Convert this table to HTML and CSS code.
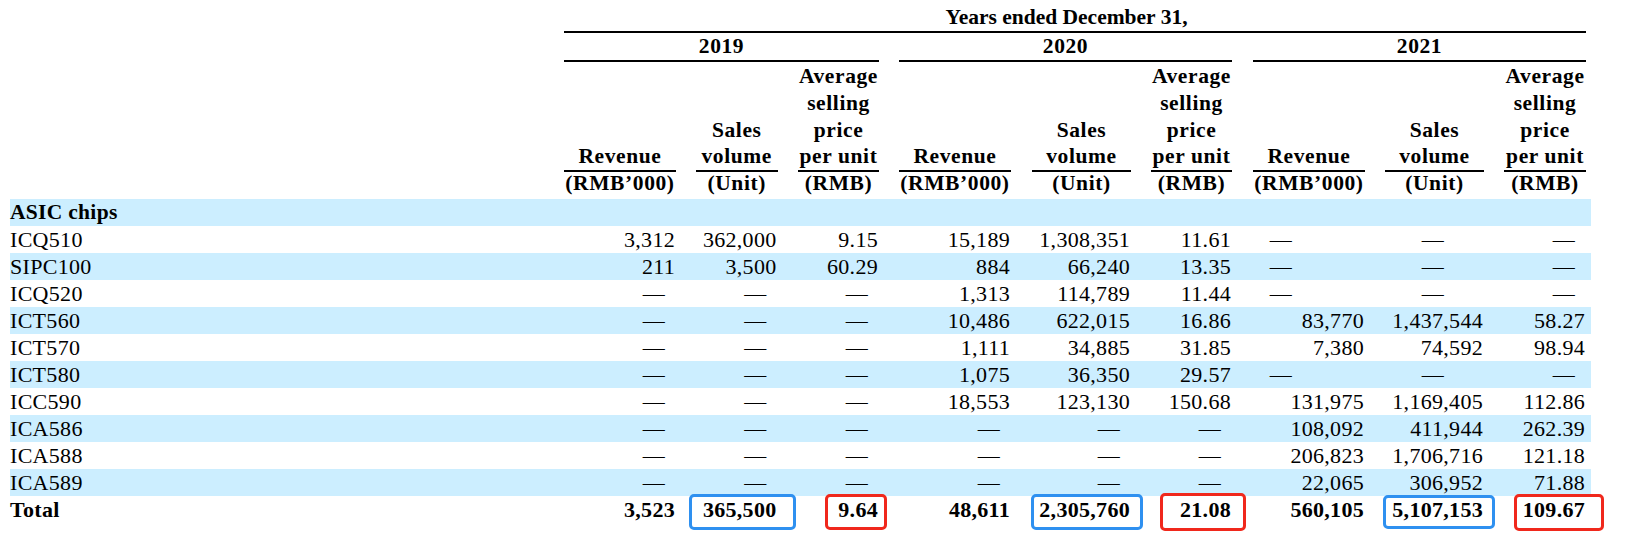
FILE: index.html
```html
<!DOCTYPE html>
<html lang="en">
<head>
<meta charset="utf-8">
<title>ASIC chips revenue</title>
<link rel="stylesheet" href="styles.css">
</head>
<body>
<div class="page">
<table class="fin">
  <colgroup>
    <col class="c-label">
    <col class="c-rev"><col class="c-gap"><col class="c-sv19"><col class="c-gap2"><col class="c-asp">
    <col class="c-gap">
    <col class="c-rev"><col class="c-gap3"><col class="c-sv"><col class="c-gap"><col class="c-asp">
    <col class="c-gap3">
    <col class="c-rev"><col class="c-gap"><col class="c-sv"><col class="c-gap"><col class="c-asp2">
    <col class="c-trail">
  </colgroup>
  <thead>
    <tr class="h-top">
      <td></td>
      <th colspan="17" class="rule title">Years ended December 31,</th>
      <td></td>
    </tr>
    <tr class="h-year">
      <td></td>
      <th colspan="5" class="rule">2019</th>
      <td></td>
      <th colspan="5" class="rule">2020</th>
      <td></td>
      <th colspan="5" class="rule">2021</th>
      <td></td>
    </tr>
    <tr class="h-col">
      <td></td>
      <th class="rule">Revenue</th><td></td>
      <th class="rule">Sales<br>volume</th><td></td>
      <th class="rule">Average<br>selling<br>price<br>per unit</th>
      <td></td>
      <th class="rule">Revenue</th><td></td>
      <th class="rule">Sales<br>volume</th><td></td>
      <th class="rule">Average<br>selling<br>price<br>per unit</th>
      <td></td>
      <th class="rule">Revenue</th><td></td>
      <th class="rule">Sales<br>volume</th><td></td>
      <th class="rule">Average<br>selling<br>price<br>per unit</th>
      <td></td>
    </tr>
    <tr class="h-unit">
      <td></td>
      <th>(RMB’000)</th><td></td>
      <th>(Unit)</th><td></td>
      <th>(RMB)</th>
      <td></td>
      <th>(RMB’000)</th><td></td>
      <th>(Unit)</th><td></td>
      <th>(RMB)</th>
      <td></td>
      <th>(RMB’000)</th><td></td>
      <th>(Unit)</th><td></td>
      <th>(RMB)</th>
      <td></td>
    </tr>
  </thead>
  <tbody>
    <tr class="shade section">
      <td class="label">ASIC chips</td>
      <td></td><td></td><td></td><td></td><td></td><td></td>
      <td></td><td></td><td></td><td></td><td></td><td></td>
      <td></td><td></td><td></td><td></td><td></td><td></td>
    </tr>
    <tr>
      <td class="label">ICQ510</td>
      <td class="num">3,312</td><td></td><td class="num">362,000</td><td></td><td class="num">9.15</td>
      <td></td>
      <td class="num">15,189</td><td></td><td class="num">1,308,351</td><td></td><td class="num">11.61</td>
      <td></td>
      <td class="dash d-rev21">—</td><td></td><td class="dash d-sv21">—</td><td></td><td class="dash">—</td>
      <td></td>
    </tr>
    <tr class="shade">
      <td class="label">SIPC100</td>
      <td class="num">211</td><td></td><td class="num">3,500</td><td></td><td class="num">60.29</td>
      <td></td>
      <td class="num">884</td><td></td><td class="num">66,240</td><td></td><td class="num">13.35</td>
      <td></td>
      <td class="dash d-rev21">—</td><td></td><td class="dash d-sv21">—</td><td></td><td class="dash">—</td>
      <td></td>
    </tr>
    <tr>
      <td class="label">ICQ520</td>
      <td class="dash">—</td><td></td><td class="dash">—</td><td></td><td class="dash">—</td>
      <td></td>
      <td class="num">1,313</td><td></td><td class="num">114,789</td><td></td><td class="num">11.44</td>
      <td></td>
      <td class="dash d-rev21">—</td><td></td><td class="dash d-sv21">—</td><td></td><td class="dash">—</td>
      <td></td>
    </tr>
    <tr class="shade">
      <td class="label">ICT560</td>
      <td class="dash">—</td><td></td><td class="dash">—</td><td></td><td class="dash">—</td>
      <td></td>
      <td class="num">10,486</td><td></td><td class="num">622,015</td><td></td><td class="num">16.86</td>
      <td></td>
      <td class="num">83,770</td><td></td><td class="num">1,437,544</td><td></td><td class="num">58.27</td>
      <td></td>
    </tr>
    <tr>
      <td class="label">ICT570</td>
      <td class="dash">—</td><td></td><td class="dash">—</td><td></td><td class="dash">—</td>
      <td></td>
      <td class="num">1,111</td><td></td><td class="num">34,885</td><td></td><td class="num">31.85</td>
      <td></td>
      <td class="num">7,380</td><td></td><td class="num">74,592</td><td></td><td class="num">98.94</td>
      <td></td>
    </tr>
    <tr class="shade">
      <td class="label">ICT580</td>
      <td class="dash">—</td><td></td><td class="dash">—</td><td></td><td class="dash">—</td>
      <td></td>
      <td class="num">1,075</td><td></td><td class="num">36,350</td><td></td><td class="num">29.57</td>
      <td></td>
      <td class="dash d-rev21">—</td><td></td><td class="dash d-sv21">—</td><td></td><td class="dash">—</td>
      <td></td>
    </tr>
    <tr>
      <td class="label">ICC590</td>
      <td class="dash">—</td><td></td><td class="dash">—</td><td></td><td class="dash">—</td>
      <td></td>
      <td class="num">18,553</td><td></td><td class="num">123,130</td><td></td><td class="num">150.68</td>
      <td></td>
      <td class="num">131,975</td><td></td><td class="num">1,169,405</td><td></td><td class="num">112.86</td>
      <td></td>
    </tr>
    <tr class="shade">
      <td class="label">ICA586</td>
      <td class="dash">—</td><td></td><td class="dash">—</td><td></td><td class="dash">—</td>
      <td></td>
      <td class="dash">—</td><td></td><td class="dash">—</td><td></td><td class="dash">—</td>
      <td></td>
      <td class="num">108,092</td><td></td><td class="num">411,944</td><td></td><td class="num">262.39</td>
      <td></td>
    </tr>
    <tr>
      <td class="label">ICA588</td>
      <td class="dash">—</td><td></td><td class="dash">—</td><td></td><td class="dash">—</td>
      <td></td>
      <td class="dash">—</td><td></td><td class="dash">—</td><td></td><td class="dash">—</td>
      <td></td>
      <td class="num">206,823</td><td></td><td class="num">1,706,716</td><td></td><td class="num">121.18</td>
      <td></td>
    </tr>
    <tr class="shade">
      <td class="label">ICA589</td>
      <td class="dash">—</td><td></td><td class="dash">—</td><td></td><td class="dash">—</td>
      <td></td>
      <td class="dash">—</td><td></td><td class="dash">—</td><td></td><td class="dash">—</td>
      <td></td>
      <td class="num">22,065</td><td></td><td class="num">306,952</td><td></td><td class="num">71.88</td>
      <td></td>
    </tr>
    <tr class="total">
      <td class="label">Total</td>
      <td class="num">3,523</td><td></td>
      <td class="num"><span class="mark blue m1">365,500</span></td><td></td>
      <td class="num"><span class="mark red m2">9.64</span></td>
      <td></td>
      <td class="num">48,611</td><td></td>
      <td class="num"><span class="mark blue m3">2,305,760</span></td><td></td>
      <td class="num"><span class="mark red m4">21.08</span></td>
      <td></td>
      <td class="num">560,105</td><td></td>
      <td class="num"><span class="mark blue m5">5,107,153</span></td><td></td>
      <td class="num"><span class="mark red m6">109.67</span></td>
      <td></td>
    </tr>
  </tbody>
</table>
</div>
</body>
</html>
```

FILE: styles.css
```css
* { box-sizing: border-box; }

html, body {
  margin: 0;
  padding: 0;
  background: #ffffff;
}

.page {
  padding: 0 0 16px 10px;
  font-family: "Liberation Serif", "Times New Roman", serif;
  color: #000000;
}

.fin {
  table-layout: fixed;
  width: 1581px;
  border-collapse: separate;
  border-spacing: 0;
}

.c-label { width: 554px; }
.c-rev { width: 112px; }
.c-sv19 { width: 81.5px; }
.c-sv { width: 99px; }
.c-asp { width: 81px; }
.c-asp2 { width: 82px; }
.c-gap { width: 20px; }
.c-gap2 { width: 20.5px; }
.c-gap3 { width: 21px; }
.c-trail { width: 5px; }

.fin td, .fin th {
  padding: 0;
  white-space: nowrap;
}

.fin th {
  font-weight: bold;
  font-size: 21.5px;
  letter-spacing: 0.6px;
  text-align: center;
}

.fin th.title {
  letter-spacing: 0;
}

.rule { border-bottom: 2px solid #000000; }

.h-top th {
  line-height: 27px;
  padding-top: 4px;
  padding-right: 17px;
}

.h-year th {
  line-height: 27px;
}

.h-col th {
  line-height: 26.7px;
  padding-top: 1.2px;
  vertical-align: bottom;
}

.h-unit th {
  line-height: 23px;
  padding-bottom: 4px;
}

.fin tbody td {
  font-size: 22px;
  letter-spacing: 0.3px;
  line-height: 27px;
  height: 27px;
  vertical-align: middle;
}

.shade td { background: #cceeff; }

.section .label,
.total td {
  font-weight: bold;
  font-size: 21.5px;
}

.fin tbody td.num {
  text-align: right;
  padding-right: 1px;
}

.fin tbody td.dash {
  text-align: right;
  padding-right: 11px;
}

.fin tbody td.d-rev21 { padding-right: 73px; }
.fin tbody td.d-sv21 { padding-right: 40px; }

.mark {
  position: relative;
  display: inline-block;
}

.mark::after {
  content: "";
  position: absolute;
  border: 3px solid;
  border-radius: 5px;
  pointer-events: none;
}

.blue::after { border-color: #2e90f0; }
.red::after { border-color: #f0281c; }

.m1::after { left: -14px; right: -19px; top: -2px; bottom: -7px; }
.m2::after { left: -13px; right: -9px; top: -2px; bottom: -7px; }
.m3::after { left: -8px; right: -13px; top: -2px; bottom: -7px; }
.m4::after { left: -20px; right: -15px; top: -3px; bottom: -8px; }
.m5::after { left: -9px; right: -12px; top: -1px; bottom: -6px; }
.m6::after { left: -9px; right: -19px; top: -2px; bottom: -8px; }
```
